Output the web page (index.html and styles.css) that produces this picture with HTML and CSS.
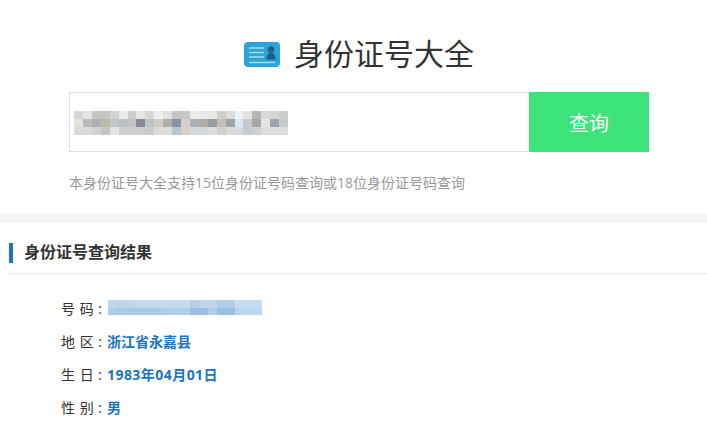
FILE: index.html
```html
<!DOCTYPE html>
<html lang="zh-CN">
<head>
  <meta charset="UTF-8" />
  <title>身份证号大全</title>
  <link rel="stylesheet" href="styles.css">
</head>
<body>
  <!-- Search -->
  <section class="search-section">
    <h1 class="site-title">
      <svg class="title-icon" width="36" height="25" viewBox="0 0 36 25">
        <rect width="36" height="25" rx="4" fill="#2ba4d8"/>
        <path d="M5 6h15M5 10.500h15M5 15h15M5 20.500h26" stroke="#a8dcf2" stroke-width="1.300" fill="none"/>
        <circle cx="27" cy="7.500" r="3.200" fill="#1b5f86"/>
        <path d="M22.500 17.500c0-4.500 2-6.500 4.500-6.500s4.500 2 4.500 6.500z" fill="#1b5f86"/>
      </svg>
      <span class="title-text">身份证号大全</span>
    </h1>

    <form class="search-form">
      <div class="search-input">
        <svg class="mosaic" width="214" height="24" viewBox="0 0 24 3" preserveAspectRatio="none" shape-rendering="crispEdges">
          <g>
            <rect x="0" y="0" width="1" height="1" fill="#d8d6d2"/><rect x="1" y="0" width="1" height="1" fill="#e4e4e8"/><rect x="2" y="0" width="2" height="1" fill="#c4c4c4"/><rect x="4" y="0" width="1" height="1" fill="#d4d2ce"/><rect x="5" y="0" width="1" height="1" fill="#ececec"/><rect x="6" y="0" width="1" height="1" fill="#d0cecc"/><rect x="7" y="0" width="1" height="1" fill="#e6e6e8"/><rect x="8" y="0" width="1" height="1" fill="#d8d8d8"/><rect x="9" y="0" width="1" height="1" fill="#f0eeee"/><rect x="10" y="0" width="1" height="1" fill="#e0e0e4"/><rect x="11" y="0" width="1" height="1" fill="#c4c4c6"/><rect x="12" y="0" width="1" height="1" fill="#c8c6c4"/><rect x="13" y="0" width="1" height="1" fill="#ecebe8"/><rect x="14" y="0" width="2" height="1" fill="#e8e8e6"/><rect x="16" y="0" width="1" height="1" fill="#d0cec8"/><rect x="17" y="0" width="1" height="1" fill="#e0dedc"/><rect x="18" y="0" width="1" height="1" fill="#eef4f6"/><rect x="19" y="0" width="1" height="1" fill="#e4e4e6"/><rect x="20" y="0" width="1" height="1" fill="#b8b6b4"/><rect x="21" y="0" width="1" height="1" fill="#d8d8d6"/><rect x="22" y="0" width="1" height="1" fill="#d4d4d0"/><rect x="23" y="0" width="1" height="1" fill="#cacccc"/>
          </g>
          <g>
            <rect x="0" y="1" width="1" height="1" fill="#e6e2dc"/><rect x="1" y="1" width="1" height="1" fill="#b8bcbc"/><rect x="2" y="1" width="1" height="1" fill="#b0b0b4"/><rect x="3" y="1" width="1" height="1" fill="#bdb9a8"/><rect x="4" y="1" width="1" height="1" fill="#bcc4cc"/><rect x="5" y="1" width="1" height="1" fill="#bcc0c4"/><rect x="6" y="1" width="1" height="1" fill="#c4c4c0"/><rect x="7" y="1" width="1" height="1" fill="#8c8a98"/><rect x="8" y="1" width="1" height="1" fill="#bcc4c4"/><rect x="9" y="1" width="1" height="1" fill="#cfcdc8"/><rect x="10" y="1" width="1" height="1" fill="#aeaea4"/><rect x="11" y="1" width="1" height="1" fill="#8894a4"/><rect x="12" y="1" width="1" height="1" fill="#d4d0c8"/><rect x="13" y="1" width="1" height="1" fill="#a8b0b8"/><rect x="14" y="1" width="1" height="1" fill="#b0aca8"/><rect x="15" y="1" width="1" height="1" fill="#9a9ca4"/><rect x="16" y="1" width="1" height="1" fill="#c4bfb8"/><rect x="17" y="1" width="1" height="1" fill="#a0a4a4"/><rect x="18" y="1" width="1" height="1" fill="#d4ecf4"/><rect x="19" y="1" width="1" height="1" fill="#c8cac8"/><rect x="20" y="1" width="1" height="1" fill="#a8a6a4"/><rect x="21" y="1" width="1" height="1" fill="#e6e4e2"/><rect x="22" y="1" width="1" height="1" fill="#9ca4ac"/><rect x="23" y="1" width="1" height="1" fill="#c8cccc"/>
          </g>
          <g>
            <rect x="0" y="2" width="1" height="1" fill="#dcdad4"/><rect x="1" y="2" width="1" height="1" fill="#dcdcd8"/><rect x="2" y="2" width="1" height="1" fill="#d0d4d4"/><rect x="3" y="2" width="1" height="1" fill="#c8c4c0"/><rect x="4" y="2" width="1" height="1" fill="#e4e4e4"/><rect x="5" y="2" width="3" height="1" fill="#d0cece"/><rect x="8" y="2" width="1" height="1" fill="#c8ccc8"/><rect x="9" y="2" width="2" height="1" fill="#dcdcdc"/><rect x="11" y="2" width="1" height="1" fill="#b8c4cc"/><rect x="12" y="2" width="1" height="1" fill="#d4d0cc"/><rect x="13" y="2" width="2" height="1" fill="#d4d8dc"/><rect x="15" y="2" width="1" height="1" fill="#dcdcdc"/><rect x="16" y="2" width="1" height="1" fill="#d0d0cc"/><rect x="17" y="2" width="1" height="1" fill="#dcdcd8"/><rect x="18" y="2" width="1" height="1" fill="#d4dce0"/><rect x="19" y="2" width="1" height="1" fill="#c8ccd0"/><rect x="20" y="2" width="1" height="1" fill="#ccd0d0"/><rect x="21" y="2" width="3" height="1" fill="#dedede"/>
          </g>
        </svg>
      </div>
      <button type="button" class="search-btn">查询</button>
    </form>

    <p class="search-note">本身份证号大全支持15位身份证号码查询或18位身份证号码查询</p>
  </section>

  <div class="divider-band"></div>

  <!-- Result -->
  <section class="result-section">
    <h2 class="section-header">身份证号查询结果</h2>
    <ul class="result-list">
      <li>
        <span class="result-label">号 码 :</span>
        <svg class="mosaic result-mosaic" width="154" height="15" viewBox="0 0 17 2" preserveAspectRatio="none" shape-rendering="crispEdges">
          <rect x="0" y="0" width="17" height="1" fill="#bdd6ee"/>
          <rect x="0" y="1" width="17" height="1" fill="#b0cdeb"/>
          <rect x="3" y="0" width="6" height="1" fill="#c4daf0"/>
          <rect x="1" y="1" width="5" height="1" fill="#a9c9e9"/>
          <rect x="9" y="0" width="1" height="1" fill="#b4d0ec"/>
          <rect x="9" y="1" width="2" height="1" fill="#9bbfe4"/>
          <rect x="12" y="1" width="2" height="1" fill="#9bbfe4"/>
          <rect x="12" y="0" width="2" height="1" fill="#b0cdea"/>
          <rect x="14" y="0" width="3" height="1" fill="#c6dcf1"/>
          <rect x="14" y="1" width="3" height="1" fill="#bcd6ef"/>
        </svg>
      </li>
      <li><span class="result-label">地 区 :</span><span class="result-value">浙江省永嘉县</span></li>
      <li><span class="result-label">生 日 :</span><span class="result-value result-date">1983年04月01日</span></li>
      <li><span class="result-label">性 别 :</span><span class="result-value">男</span></li>
    </ul>
  </section>
</body>
</html>
```

FILE: styles.css
```css
* {
  margin: 0;
  padding: 0;
  box-sizing: border-box;
  font-family: "Open Sans", "Noto Sans CJK SC", sans-serif;
}

html,
body {
  height: 447px;
  overflow: hidden;
}

body {
  background-color: #fff;
  color: #333;
}

.search-section {
  padding: 32px 0 0 69px;
  height: 213px;
}

.site-title {
  display: flex;
  align-items: center;
  justify-content: center;
  gap: 14px;
  width: 580px;
  height: 44px;
  margin-bottom: 16px;
  font-size: 30px;
  font-weight: 400;
  color: #333;
}

.title-text {
  line-height: 40px;
}

.title-icon {
  display: block;
  flex-shrink: 0;
}

.search-form {
  display: flex;
  width: 580px;
  height: 60px;
}

.search-input {
  display: flex;
  align-items: center;
  width: 460px;
  padding: 2px 0 0 4px;
  background-color: #fff;
  border: 1px solid #ddd;
  border-right: none;
}

.mosaic {
  display: block;
  flex-shrink: 0;
}

.search-btn {
  width: 120px;
  background-color: #3ce37b;
  color: #fff;
  border: none;
  font-size: 20px;
  cursor: pointer;
}

.search-note {
  margin-top: 21px;
  font-size: 14px;
  line-height: 20px;
  color: #999;
}

.divider-band {
  height: 10px;
  background-color: #f5f5f5;
}

.result-section {
  padding: 20px 0 0 9px;
}

.section-header {
  display: flex;
  gap: 11px;
  height: 31px;
  font-size: 16px;
  font-weight: 700;
  line-height: 18px;
  color: #333;
  border-bottom: 1px solid #e5e5e5;
}

.section-header::before {
  content: "";
  width: 4px;
  height: 20px;
  background-color: #1a75c4;
}

.result-list {
  list-style: none;
  padding: 17px 0 0 52px;
}

.result-list li {
  display: flex;
  align-items: center;
  height: 33px;
  font-size: 14px;
  color: #333;
}

.result-label {
  width: 46px;
  flex-shrink: 0;
  word-spacing: 1px;
  white-space: pre;
}

.result-mosaic {
  margin-left: 1px;
}

.result-value {
  font-weight: 700;
  color: #1a75c4;
}

.result-date {
  letter-spacing: 0.45px;
}
```
